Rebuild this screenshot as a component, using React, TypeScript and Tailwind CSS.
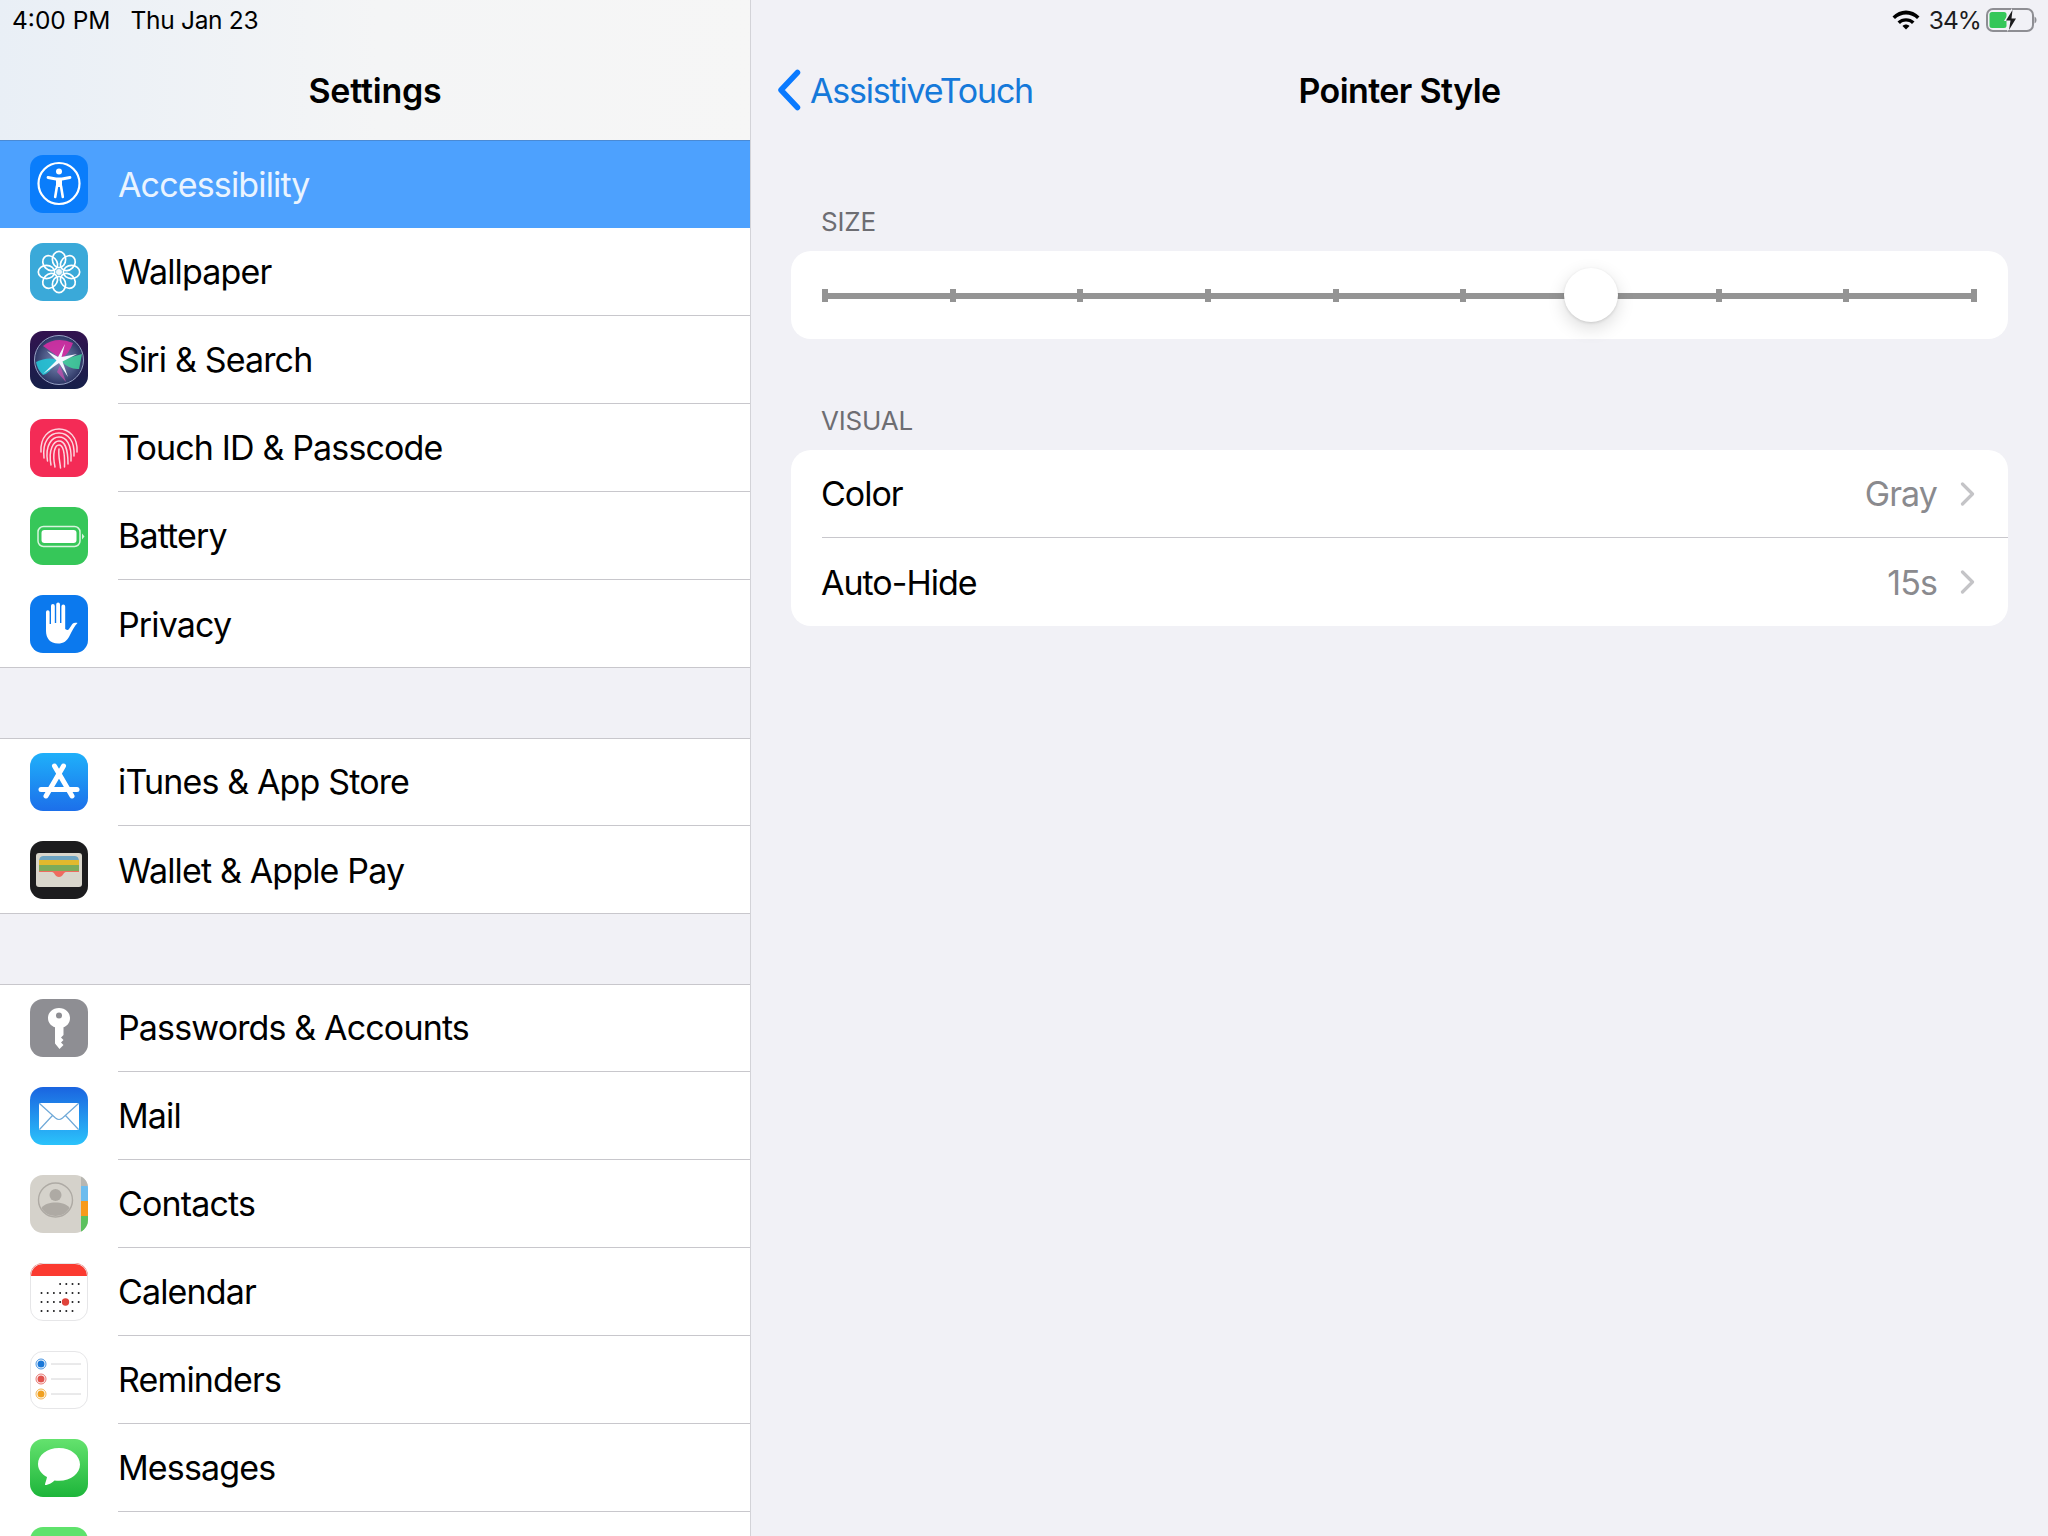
import type { ReactNode } from 'react';

const FONT = "font-['Inter','Liberation_Sans',sans-serif]";

function Svg({ children }: { children: ReactNode }) {
  return (
    <svg viewBox="0 0 58 58" className="block w-[58px] h-[58px]">
      {children}
    </svg>
  );
}

function AccessibilityIcon() {
  return (
    <Svg>
      <rect width="58" height="58" fill="#0a7dfb" />
      <circle cx="29" cy="28.5" r="20.5" fill="none" stroke="#fff" strokeWidth="2.2" />
      <circle cx="29" cy="16.5" r="3" fill="#fff" />
      <path d="M18 22.5 L26 24 H32 L40 22.5" fill="none" stroke="#fff" strokeWidth="2.8" strokeLinecap="round" strokeLinejoin="round" />
      <rect x="26" y="23" width="6" height="9" fill="#fff" />
      <path d="M27 31 L25.2 42 M31 31 L32.8 42" fill="none" stroke="#fff" strokeWidth="2.6" strokeLinecap="round" />
    </Svg>
  );
}

function WallpaperIcon() {
  const angles = [0, 45, 90, 135, 180, 225, 270, 315];
  return (
    <Svg>
      <rect width="58" height="58" fill="#3aa9d9" />
      {angles.map(a => (
        <ellipse key={a} cx="29" cy="16.5" rx="6.6" ry="8.2" fill="none" stroke="#fff" strokeWidth="1.7" transform={`rotate(${a} 29 29)`} />
      ))}
      <circle cx="29" cy="29" r="3" fill="#fff" opacity=".9" />
    </Svg>
  );
}

function SiriIcon() {
  return (
    <Svg>
      <defs>
        <linearGradient id="siriBg" x1="0" y1="0" x2="0" y2="1">
          <stop offset="0" stopColor="#32124f" />
          <stop offset="1" stopColor="#16204a" />
        </linearGradient>
        <radialGradient id="siriBall" cx=".5" cy=".5" r=".55">
          <stop offset="0" stopColor="#7f8fbc" />
          <stop offset=".65" stopColor="#46527f" />
          <stop offset="1" stopColor="#232a5a" />
        </radialGradient>
      </defs>
      <rect width="58" height="58" fill="url(#siriBg)" />
      <circle cx="29" cy="29" r="24.5" fill="url(#siriBall)" stroke="#97a2c4" strokeWidth="1" />
      <path d="M13 15 Q26 5 43 12 Q39 23 31 28 Q22 21 13 15 Z" fill="#d42ea3" opacity=".9" />
      <path d="M6 31 Q18 25 28 29 Q19 43 13 44 Q7 38 6 31 Z" fill="#25c4d6" opacity=".9" />
      <path d="M52 23 Q40 26 31 30 Q40 39 49 38 Z" fill="#3fd49c" opacity=".85" />
      <path d="M35 13 L31.5 26 L47 23 L32.5 30.5 L38 46 L29 32 L13 43 L26.5 29.5 L17 20 L28 26 Z" fill="#f3f9ff" />
      <path d="M30 34 L36 51 L27 41 Z" fill="#c84fb0" opacity=".75" />
    </Svg>
  );
}

function TouchIdIcon() {
  return (
    <Svg>
      <rect width="58" height="58" fill="#f42b56" />
      <g fill="none" stroke="#fbd7df" strokeWidth="1.5" strokeLinecap="round">
        <path d="M11 33 C10 18 19 10 29 10 C39 10 48 18 47 33" />
        <path d="M14 39 C12 22 20 14 29 14 C38 14 45 22 44 37" />
        <path d="M17.5 42 C15 26 22 18 29 18 C36 18 42 25 41 42" />
        <path d="M21 46 C18 30 24 22 29 22 C34 22 38 29 38 45" />
        <path d="M25 48 C22 34 25 26 29 26 C33 26 35 33 34.5 48" />
        <path d="M29 30 C28 36 30 43 30.5 49" />
      </g>
    </Svg>
  );
}

function BatteryIcon() {
  return (
    <Svg>
      <rect width="58" height="58" fill="#36c759" />
      <rect x="8" y="19.5" width="42" height="20" rx="5.5" fill="none" stroke="#d7f5de" strokeWidth="1.5" />
      <rect x="11.5" y="23" width="35" height="13" rx="3" fill="#fff" />
      <path d="M52 26.5 L54.5 29.5 L52 32.5 Z" fill="#d7f5de" />
    </Svg>
  );
}

function PrivacyIcon() {
  return (
    <Svg>
      <rect width="58" height="58" fill="#0b79ee" />
      <path d="M16 17 a1.8 1.8 0 0 1 3.6 0 V29 h1.4 V11 a1.9 1.9 0 0 1 3.8 0 V28 h1.4 V9.5 a1.9 1.9 0 0 1 3.8 0 V28 h1.4 V11.5 a1.9 1.9 0 0 1 3.8 0 V34 C37 35 38 35.5 39 34 L42 29.5 C43.5 27.5 47 27.8 47.5 28 C44.5 31 42 36 39.5 41 C37 46 33.5 48.5 28 48.5 C20 48.5 16 43 16 36 Z" fill="#fff" />
    </Svg>
  );
}

function AppStoreIcon() {
  return (
    <Svg>
      <defs>
        <linearGradient id="appBg" x1="0" y1="0" x2="0" y2="1">
          <stop offset="0" stopColor="#1fb0fa" />
          <stop offset="1" stopColor="#1c6fea" />
        </linearGradient>
      </defs>
      <rect width="58" height="58" fill="url(#appBg)" />
      <g stroke="#fff" strokeLinecap="round" fill="none">
        <path d="M33.5 13 L16 43" strokeWidth="5" />
        <path d="M24.5 13 L42 43" strokeWidth="5" />
        <path d="M11 36.5 H47" strokeWidth="5" />
      </g>
    </Svg>
  );
}

function WalletIcon() {
  return (
    <Svg>
      <rect width="58" height="58" fill="#1c1c1e" />
      <rect x="6" y="12" width="46" height="34" rx="3" fill="#d9d6cc" />
      <path d="M9 21 Q9 15 13 15 H45 Q49 15 49 21 Z" fill="#6ea4c2" />
      <rect x="9" y="19" width="40" height="5" fill="#e2b92d" />
      <rect x="9" y="24" width="40" height="6" fill="#7cab5a" />
      <path d="M9 30 H49 V31 H36 C33.5 31 33 36 29 36 C25 36 24.5 31 22 31 H9 Z" fill="#ee6c5f" />
    </Svg>
  );
}

function PasswordsIcon() {
  return (
    <Svg>
      <rect width="58" height="58" fill="#8e8e93" />
      <path d="M29 9 C22.5 9 18 13.5 18 19 C18 23.5 20.8 26.8 25 28.3 V44.5 L29.5 50 L33.5 46 L31 43.5 L33.5 41 L31 38.5 L33.5 36 V28.3 C37.5 26.8 40 23.5 40 19 C40 13.5 35.5 9 29 9 Z" fill="#fff" />
      <circle cx="29" cy="16.5" r="3" fill="#8e8e93" />
    </Svg>
  );
}

function MailIcon() {
  return (
    <Svg>
      <defs>
        <linearGradient id="mailBg" x1="0" y1="0" x2="0" y2="1">
          <stop offset="0" stopColor="#1a64e0" />
          <stop offset="1" stopColor="#2bc3fb" />
        </linearGradient>
      </defs>
      <rect width="58" height="58" fill="url(#mailBg)" />
      <rect x="9" y="16" width="40" height="27" rx="1.5" fill="#fff" />
      <path d="M9.5 16.5 L25.5 31 Q29 34 32.5 31 L48.5 16.5 M9.5 42.5 L22.5 28.5 M48.5 42.5 L35.5 28.5" fill="none" stroke="#6fa9d8" strokeWidth="1.2" />
    </Svg>
  );
}

function ContactsIcon() {
  return (
    <Svg>
      <rect width="58" height="58" fill="#d5d2cb" />
      <rect x="51" y="0" width="7" height="11" fill="#b7b6b1" />
      <rect x="51" y="11" width="7" height="15" fill="#6cbcee" />
      <rect x="51" y="26" width="7" height="15" fill="#f79a1b" />
      <rect x="51" y="41" width="7" height="17" fill="#5cc15e" />
      <circle cx="25.5" cy="25" r="17" fill="none" stroke="#aeaaa4" strokeWidth="1.4" />
      <circle cx="25.5" cy="20" r="6" fill="#aeaaa4" />
      <path d="M11.5 33 C14 29 20 27.5 25.5 27.5 C31 27.5 37 29 39.5 33 C37 38 31.5 41 25.5 41 C19.5 41 14 38 11.5 33 Z" fill="#aeaaa4" />
    </Svg>
  );
}

function CalendarIcon() {
  const rows = [
    { y: 21, from: 3 },
    { y: 30, from: 0 },
    { y: 39, from: 0 },
    { y: 48, from: 0, to: 5 },
  ];
  return (
    <Svg>
      <rect width="58" height="58" fill="#fff" />
      <rect width="58" height="13" fill="#fb3a30" />
      {rows.map(r =>
        [0, 1, 2, 3, 4, 5, 6].filter(i => i >= r.from && i <= (r.to ?? 6)).map(i => (
          <circle key={`${r.y}-${i}`} cx={11.5 + i * 6.2} cy={r.y} r="1" fill="#1c1c1e" />
        ))
      )}
      <circle cx="35.5" cy="39" r="3.7" fill="#e0433b" />
    </Svg>
  );
}

function RemindersIcon() {
  const items = [
    { y: 13, c: '#1b78d8' },
    { y: 28, c: '#e0534d' },
    { y: 43, c: '#f0a020' },
  ];
  return (
    <Svg>
      <rect width="58" height="58" fill="#fff" />
      {items.map(it => (
        <g key={it.y}>
          <circle cx="11" cy={it.y} r="5" fill="#fff" stroke={it.c} strokeWidth="0.8" />
          <circle cx="11" cy={it.y} r="3.5" fill={it.c} />
          <path d={`M21 ${it.y} H51`} stroke="#c9c9cb" strokeWidth="0.8" />
        </g>
      ))}
    </Svg>
  );
}

function MessagesIcon() {
  return (
    <Svg>
      <defs>
        <linearGradient id="msgBg" x1="0" y1="0" x2="0" y2="1">
          <stop offset="0" stopColor="#64e26e" />
          <stop offset="1" stopColor="#1db53a" />
        </linearGradient>
      </defs>
      <rect width="58" height="58" fill="url(#msgBg)" />
      <path d="M29 9 C17 9 8 16 8 25 C8 31 12 35.5 17 38 C16.5 41 15 44 15 46 C19 46 22.5 43.5 24.5 41.5 C26 41.7 27.5 41.8 29 41.8 C41 41.8 50 34.5 50 25.5 C50 16.5 41 9 29 9 Z" fill="#fff" />
    </Svg>
  );
}

function FaceTimeIcon() {
  return (
    <Svg>
      <rect width="58" height="58" fill="#5fe26c" />
    </Svg>
  );
}

type RowData = { label: string; icon: ReactNode; light?: boolean };

const group1: RowData[] = [
  { label: 'Accessibility', icon: <AccessibilityIcon /> },
  { label: 'Wallpaper', icon: <WallpaperIcon /> },
  { label: 'Siri & Search', icon: <SiriIcon /> },
  { label: 'Touch ID & Passcode', icon: <TouchIdIcon /> },
  { label: 'Battery', icon: <BatteryIcon /> },
  { label: 'Privacy', icon: <PrivacyIcon /> },
];

const group2: RowData[] = [
  { label: 'iTunes & App Store', icon: <AppStoreIcon /> },
  { label: 'Wallet & Apple Pay', icon: <WalletIcon /> },
];

// last row runs off the bottom of the screen, only the top of its icon shows
const group3: RowData[] = [
  { label: 'Passwords & Accounts', icon: <PasswordsIcon /> },
  { label: 'Mail', icon: <MailIcon /> },
  { label: 'Contacts', icon: <ContactsIcon /> },
  { label: 'Calendar', icon: <CalendarIcon />, light: true },
  { label: 'Reminders', icon: <RemindersIcon />, light: true },
  { label: 'Messages', icon: <MessagesIcon /> },
  { label: '', icon: <FaceTimeIcon /> },
];

function SidebarRow({ row, selected, last }: { row: RowData; selected?: boolean; last?: boolean }) {
  return (
    <div className={`flex h-[88px] items-stretch pl-[30px] ${selected ? 'bg-[#4da1fe] shadow-[inset_0_1px_0_#4a8ad4]' : ''}`}>
      <div className="flex w-[88px] shrink-0 items-center">
        <div className={`h-[58px] w-[58px] overflow-hidden rounded-[13px] ${row.light ? 'outline outline-1 -outline-offset-1 outline-[#e6e6e8]' : ''}`}>
          {row.icon}
        </div>
      </div>
      <div className={`flex flex-1 items-center text-[34px] tracking-[-0.85px] ${selected ? 'text-[#eaf4ff]' : 'text-black'} ${last || selected ? '' : 'border-b border-[#c8c7cc]'}`}>
        {row.label}
      </div>
    </div>
  );
}

function Sidebar() {
  return (
    <div className="w-[751px] shrink-0 border-r border-[#d3d3d8] overflow-hidden">
      <div className="h-[140px] bg-gradient-to-r from-[#e9eff6] via-[#f4f5f6] to-[#f6f6f6]">
        <div className="flex h-[40px] items-center gap-[20px] pl-[12px] pt-[1px] text-[24.5px] text-black">
          <span>4:00 PM</span>
          <span className="tracking-[-0.3px]">Thu Jan 23</span>
        </div>
        <div className="flex h-[100px] items-center justify-center text-[34px] font-semibold tracking-[-0.2px] text-black">
          Settings
        </div>
      </div>
      <div className="bg-white shadow-[inset_0_-1px_0_#c8c7cc]">
        {group1.map((row, i) => (
          <SidebarRow key={row.label} row={row} selected={i === 0} last={i === group1.length - 1} />
        ))}
      </div>
      <div className="mt-[70px] bg-white shadow-[inset_0_1px_0_#c8c7cc,inset_0_-1px_0_#c8c7cc]">
        {group2.map((row, i) => (
          <SidebarRow key={row.label} row={row} last={i === group2.length - 1} />
        ))}
      </div>
      <div className="mt-[70px] bg-white shadow-[inset_0_1px_0_#c8c7cc]">
        {group3.map(row => (
          <SidebarRow key={row.label} row={row} />
        ))}
      </div>
    </div>
  );
}

function StatusRight() {
  return (
    <div className="flex h-[40px] items-center justify-end pr-[11px] text-[24.5px] text-[#1c1c1e]">
      <svg viewBox="0 0 28 20" className="mr-[9px] h-[20px] w-[28px]">
        <path d="M0.5 6.5 C8 -1.5 20 -1.5 27.5 6.5 L25 9 C19 3 9 3 3 9 Z" fill="#000" />
        <path d="M5.5 11.5 C10 7 18 7 22.5 11.5 L20 14 C16.5 10.8 11.5 10.8 8 14 Z" fill="#000" />
        <path d="M10.5 16 C12.5 14 15.5 14 17.5 16 L14 19.5 Z" fill="#000" />
      </svg>
      <span className="mr-[5px] tracking-[-0.9px]">34%</span>
      <svg viewBox="0 0 51 24" className="h-[24px] w-[51px]">
        <rect x="1" y="1" width="46" height="22" rx="6" fill="none" stroke="#8e8e93" strokeWidth="2" />
        <rect x="3.5" y="4" width="17" height="16" rx="2.5" fill="#34c759" />
        <path d="M48.5 8.5 C50 9.5 50.5 10.5 50.5 12 C50.5 13.5 50 14.5 48.5 15.5 Z" fill="#8e8e93" />
        <path d="M26 0 L18 13 H23 L21 24 L31 10 H26 Z" fill="#f2f2f7" />
        <path d="M26.5 2 L20 12.5 H24.5 L23 22 L30 10.5 H25.5 Z" fill="#1c1c1e" />
      </svg>
    </div>
  );
}

function Slider() {
  const ticks = [0, 1, 2, 3, 4, 5, 6, 7, 8, 9];
  return (
    <div className="flex h-[88px] items-center rounded-[20px] bg-white px-[31px]">
      <div className="relative flex h-[13px] w-full items-center justify-between">
        <div className="absolute inset-x-0 top-[4px] h-[6px] bg-[#949494]" />
        {ticks.map(t => (
          <div key={t} className="relative h-[13px] w-[6px] bg-[#949494]" />
        ))}
        <div className="absolute left-[742px] top-[-21px] h-[54px] w-[54px] rounded-full bg-white shadow-[0_6px_18px_rgba(0,0,0,0.14),0_1px_3px_rgba(0,0,0,0.12)]" />
      </div>
    </div>
  );
}

function ValueRow({ label, value, last }: { label: string; value: string; last?: boolean }) {
  return (
    <div className={`ml-[31px] flex h-[88px] items-center pr-[33px] ${last ? '' : 'border-b border-[#c8c7cc]'}`}>
      <span className="-ml-[1px] flex-1 text-[34px] tracking-[-1px] text-black">{label}</span>
      <span className="text-[34px] tracking-[-0.9px] text-[#8a8a8e]">{value}</span>
      <svg viewBox="0 0 15 24" className="ml-[23px] h-[24px] w-[15px]">
        <path d="M2.5 2 L12.5 12 L2.5 22" fill="none" stroke="#c4c4c7" strokeWidth="3.2" strokeLinecap="round" strokeLinejoin="round" />
      </svg>
    </div>
  );
}

function SectionLabel({ children }: { children: ReactNode }) {
  return (
    <div className="mb-[13px] flex h-[34px] items-center pl-[30px] text-[26px] tracking-[-0.2px] text-[#6d6d72]">
      {children}
    </div>
  );
}

function DetailPane() {
  return (
    <div className="flex-1">
      <StatusRight />
      <div className="grid h-[100px] grid-cols-[1fr_auto_1fr] items-center">
        <div className="flex items-center pl-[26px] text-[34px] tracking-[-1.2px] text-[#1579da]">
          <svg viewBox="0 0 24 42" className="mr-[9px] h-[42px] w-[24px]">
            <path d="M20.5 3.5 L4 21 L20.5 38.5" fill="none" stroke="#0a7aff" strokeWidth="5.5" strokeLinecap="round" strokeLinejoin="round" />
          </svg>
          AssistiveTouch
        </div>
        <div className="text-[34px] font-semibold tracking-[-0.6px] text-black">Pointer Style</div>
        <div />
      </div>
      <div className="px-[40px] pt-[64px]">
        <SectionLabel>SIZE</SectionLabel>
        <Slider />
        <div className="h-[64px]" />
        <SectionLabel>VISUAL</SectionLabel>
        <div className="overflow-hidden rounded-[20px] bg-white">
          <ValueRow label="Color" value="Gray" />
          <ValueRow label="Auto-Hide" value="15s" last />
        </div>
      </div>
    </div>
  );
}

export default function App() {
  return (
    <div className={`flex h-[1536px] w-[2048px] overflow-hidden bg-[#f1f1f6] ${FONT}`}>
      <Sidebar />
      <DetailPane />
    </div>
  );
}
